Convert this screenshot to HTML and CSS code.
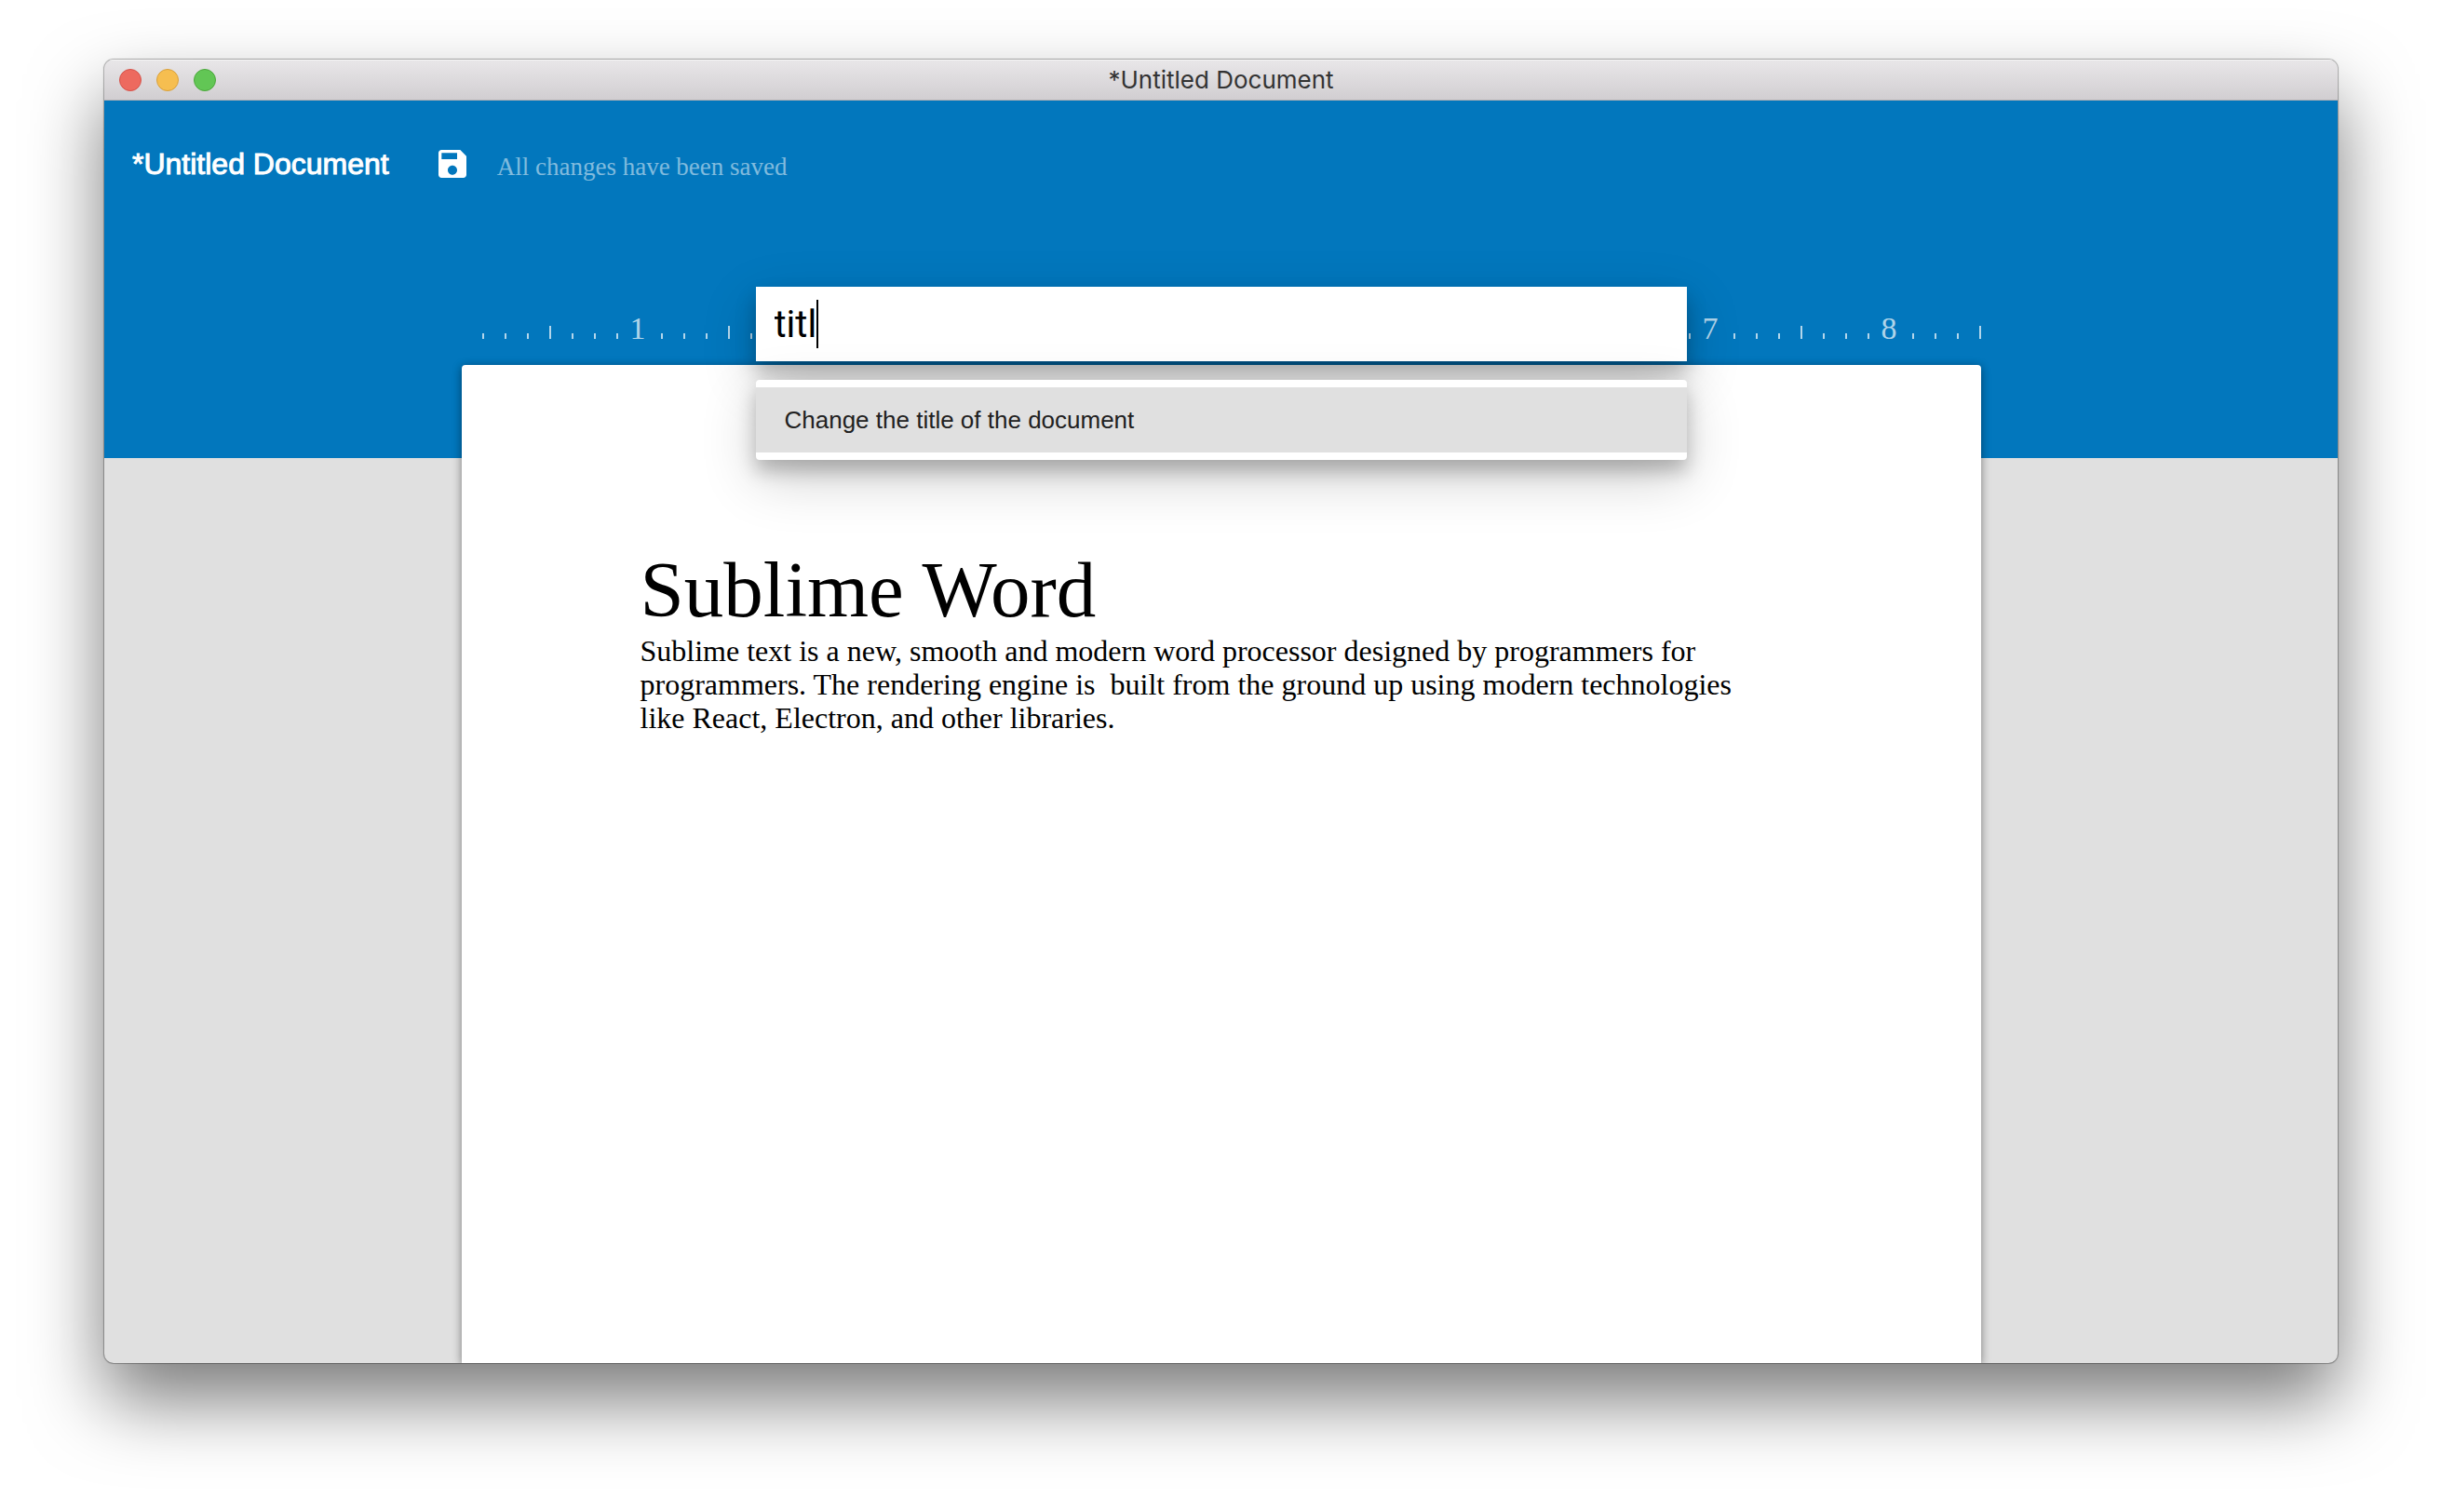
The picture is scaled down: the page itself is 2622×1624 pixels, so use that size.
FILE: index.html
```html
<!DOCTYPE html>
<html lang="en">
<head>
<meta charset="utf-8">
<meta name="viewport" content="width=device-width, initial-scale=1">
<title>*Untitled Document</title>
<link rel="stylesheet" href="styles.css">
</head>
<body>
<div class="window">
  <div class="titlebar">
    <div class="window-controls">
      <button class="control control-close" type="button" aria-label="Close"></button>
      <button class="control control-minimize" type="button" aria-label="Minimize"></button>
      <button class="control control-zoom" type="button" aria-label="Zoom"></button>
    </div>
    <div class="window-title">*Untitled Document</div>
  </div>
  <div class="workspace">
    <header class="header">
      <div class="appbar">
        <div class="document-name">*Untitled Document</div>
        <button class="save" type="button" aria-label="Save">
          <svg viewBox="0 0 24 24" width="40" height="40" aria-hidden="true"><path fill="currentColor" d="M17 3H5c-1.110 0-2 .9-2 2v14c0 1.100.89 2 2 2h14c1.100 0 2-.9 2-2V7l-4-4zm-5 16c-1.660 0-3-1.340-3-3s1.340-3 3-3 3 1.340 3 3-1.340 3-3 3zm3-10H5V5h10v4z"/></svg>
        </button>
        <div class="save-status">All changes have been saved</div>
      </div>
      <ol class="ruler">
        <li class="inch">1</li>
        <li class="inch">2</li>
        <li class="inch">3</li>
        <li class="inch">4</li>
        <li class="inch">5</li>
        <li class="inch">6</li>
        <li class="inch">7</li>
        <li class="inch">8</li>
        <li class="inch inch-half"></li>
      </ol>
    </header>
    <main class="page">
      <h1 class="page-heading">Sublime Word</h1>
      <p class="page-text">Sublime text is a new, smooth and modern word processor designed by programmers for programmers. The rendering engine is&nbsp; built from the ground up using modern technologies like React, Electron, and other libraries.</p>
    </main>
    <div class="palette">
      <div class="palette-field">
        <input class="palette-input" type="text" value="titl" size="2" aria-label="Command">
        <span class="caret"></span>
      </div>
      <div class="suggestions">
        <button class="suggestion" type="button">Change the title of the document</button>
      </div>
    </div>
  </div>
</div>
</body>
</html>
```

FILE: styles.css
```css
* {
  box-sizing: border-box;
}

body {
  margin: 0;
  background: #fff;
  font-family: "Liberation Sans", Arial, sans-serif;
}

button {
  padding: 0;
  border: 0;
  background: none;
  font: inherit;
  color: inherit;
}

.window {
  display: flex;
  flex-direction: column;
  min-height: calc(100vh - 224px);
  margin: 64px 111px 160px 112px;
  border-radius: 10px;
  overflow: hidden;
  background: #e0e0e0;
  box-shadow: 0 0 1px 1px rgba(0, 0, 0, 0.3), 0 40px 80px rgba(0, 0, 0, 0.52);
}

.titlebar {
  display: grid;
  grid-template-columns: 1fr auto 1fr;
  align-items: center;
  height: 44px;
  padding: 0 16px;
  border-bottom: 1px solid #b4b1b4;
  background: linear-gradient(#e9e7e9, #d1ced1);
  box-shadow: inset 0 1px #f6f5f6;
}

.window-controls {
  display: flex;
  gap: 16px;
}

.control {
  width: 24px;
  height: 24px;
  border: 1px solid;
  border-radius: 50%;
}

.control-close {
  border-color: #d5524a;
  background: #ed6a5f;
}

.control-minimize {
  border-color: #d8a03c;
  background: #f6be50;
}

.control-zoom {
  border-color: #4ba73c;
  background: #62c655;
}

.window-title {
  font-family: Inter, sans-serif;
  font-size: 26px;
  color: #333;
}

.workspace {
  position: relative;
  display: flex;
  flex: 1;
  flex-direction: column;
  align-items: center;
}

.header {
  display: flex;
  flex-direction: column;
  align-items: center;
  width: 100%;
  padding: 44px 0 128px;
  background: #0277bd;
  color: #fff;
}

.appbar {
  display: flex;
  align-items: center;
  width: 100%;
  height: 48px;
  padding: 0 30px;
}

.document-name {
  font-size: 32px;
  -webkit-text-stroke: 1px currentColor;
}

.save {
  height: 40px;
  margin: 0 28px 0 48px;
}

.save svg {
  display: block;
}

.save-status {
  padding-top: 6px;
  font-family: "Liberation Serif", "Times New Roman", serif;
  font-size: 27px;
  color: rgba(255, 255, 255, 0.5);
}

.ruler {
  display: flex;
  width: 1632px;
  height: 40px;
  margin: 124px 0 0;
  padding: 0;
  list-style: none;
  font-family: "Liberation Serif", "Times New Roman", serif;
  font-size: 34px;
  line-height: 58px;
  color: rgba(255, 255, 255, 0.7);
}

.inch {
  --tick: rgba(255, 255, 255, 0.7);
  --ticks: repeating-linear-gradient(90deg, var(--tick) 0 2px, transparent 2px 24px);
  flex-shrink: 0;
  width: 192px;
  padding-right: 2px;
  text-align: right;
  background:
    var(--ticks) 14px 34px / 50px 6px no-repeat,
    linear-gradient(var(--tick), var(--tick)) 86px 26px / 2px 14px no-repeat,
    var(--ticks) 110px 34px / 50px 6px no-repeat;
}

.inch:first-child {
  margin-left: 8px;
}

.inch-half {
  width: 96px;
}

.page {
  flex: 1;
  width: 1632px;
  max-width: 100%;
  margin-top: -100px;
  padding: 193px 224px 192px 192px;
  border-radius: 4px 4px 0 0;
  background: #fff;
  box-shadow: 0 2px 12px rgba(0, 0, 0, 0.24), 0 2px 8px rgba(0, 0, 0, 0.24);
  font-family: "Liberation Serif", "Times New Roman", serif;
  color: #000;
}

.page-heading {
  margin: 0;
  font-size: 85px;
  font-weight: 400;
  line-height: 96px;
}

.page-text {
  margin: 0;
  font-size: 32px;
  line-height: 36px;
}

.palette {
  position: absolute;
  top: 200px;
  left: 50%;
  display: flex;
  flex-direction: column;
  gap: 20px;
  width: 1000px;
  margin-left: -500px;
}

.palette-field,
.suggestions {
  background: #fff;
  box-shadow: 0 20px 60px rgba(0, 0, 0, 0.19), 0 12px 20px rgba(0, 0, 0, 0.23);
}

.palette-field {
  display: flex;
  align-items: center;
  height: 80px;
  padding: 0 20px;
}

.palette-input {
  field-sizing: content;
  height: 56px;
  padding: 0;
  border: 0;
  outline: 0;
  background: none;
  font-family: Roboto, sans-serif;
  font-size: 40px;
  color: #000;
}

.caret {
  width: 2px;
  height: 52px;
  background: #000;
}

.suggestions {
  padding: 8px 0;
  border-radius: 4px;
}

.suggestion {
  display: block;
  width: 100%;
  height: 70px;
  padding: 0 31px;
  background: #e0e0e0;
  font-size: 26px;
  text-align: left;
  color: #212121;
}
```
